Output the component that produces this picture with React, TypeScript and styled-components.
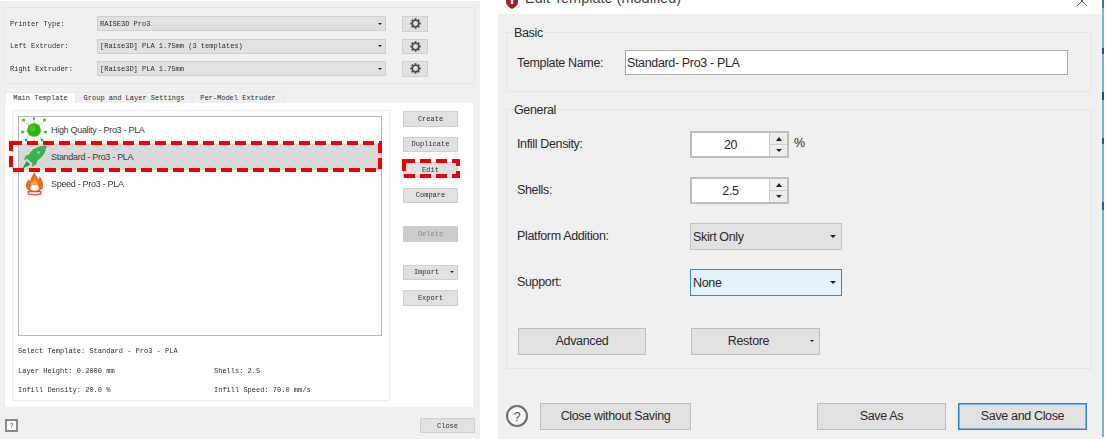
import React from "react";
import styled, { createGlobalStyle } from "styled-components";

const Global = createGlobalStyle`
  html, body { margin: 0; padding: 0; background: #fff; height: 439px; overflow: hidden; }
  #root { height: 439px; }
`;

const Page = styled.div`
  display: flex;
  width: 1105px;
  height: 439px;
  background: #fff;
  overflow: hidden;
`;

/* ---------- left window ---------- */
const LeftPane = styled.div`
  position: relative;
  width: 480px;
  height: 438px;
  margin-top: 1px;
  padding: 6px 5px 0 4px;
  box-sizing: border-box;
  background: #f0f0f0;
  font-family: "Liberation Mono", monospace;
  font-size: 7px;
  color: #2c2c2c;
  flex: none;
`;
const SoftText = styled.div`
  filter: blur(0.3px);
`;
const PrinterBox = styled.div`
  height: 77px;
  box-sizing: border-box;
  border: 1px solid #e6e6e6;
  padding: 8px 0 0 5px;
  display: flex;
  flex-direction: column;
  gap: 7px;
`;
const PrinterRow = styled.div`
  display: flex;
  align-items: center;
  height: 15.5px;
`;
const PrinterLabel = styled.span`
  width: 87px;
  flex: none;
`;
const PrinterSelect = styled.div`
  width: 289px;
  height: 15px;
  box-sizing: border-box;
  background: #e1e1e1;
  border: 1px solid #cfcfcf;
  display: flex;
  align-items: center;
  justify-content: space-between;
  padding: 0 3px 0 2px;
  flex: none;
`;
const Caret = styled.i<{ $size?: number }>`
  display: block;
  width: 0;
  height: 0;
  border-left: ${(p) => p.$size ?? 2}px solid transparent;
  border-right: ${(p) => p.$size ?? 2}px solid transparent;
  border-top: ${(p) => p.$size ?? 2}px solid #222;
  flex: none;
`;
const GearButton = styled.div`
  width: 26px;
  height: 15.5px;
  margin-left: 16px;
  box-sizing: border-box;
  background: #e1e1e1;
  border: 1px solid #cfcfcf;
  display: flex;
  align-items: center;
  justify-content: center;
  flex: none;
`;
const Tabs = styled.div`
  display: flex;
  margin: 8px 0 0 1px;
  height: 11px;
`;
const Tab = styled.div<{ $active?: boolean; $w: number }>`
  width: ${(p) => p.$w}px;
  box-sizing: border-box;
  background: ${(p) => (p.$active ? "#fff" : "#f0f0f0")};
  border: 1px solid #e8e8e8;
  border-bottom: none;
  display: flex;
  align-items: center;
  justify-content: center;
`;
const TabPanel = styled.div`
  margin-left: 1px;
  width: 468px;
  height: 304px;
  box-sizing: border-box;
  background: #fff;
  padding: 7px 0 0 7px;
  display: flex;
`;
const ListFrame = styled.div`
  width: 378px;
  height: 291px;
  box-sizing: border-box;
  border: 1px solid #ececec;
  padding: 5px 7px 0 5px;
  flex: none;
`;
const TemplateList = styled.div`
  width: 364px;
  height: 220px;
  box-sizing: border-box;
  border: 1px solid #b4b4b4;
  background: #fff;
`;
const TemplateRow = styled.div<{ $selected?: boolean }>`
  height: 26.7px;
  display: flex;
  align-items: center;
  background: ${(p) => (p.$selected ? "#d9d9d9" : "transparent")};
  font-family: "Liberation Sans", Arial, sans-serif;
  font-size: 9px;
  letter-spacing: -0.3px;
  color: #3a3a3a;
`;
const RowIcon = styled.span`
  width: 32px;
  height: 26px;
  box-sizing: border-box;
  padding-right: 2px;
  flex: none;
  display: flex;
  align-items: center;
  justify-content: center;
`;
const Summary = styled.div`
  display: grid;
  grid-template-columns: 196px 1fr;
  row-gap: 10.5px;
  padding-top: 11px;
  line-height: 9px;
`;
const SummaryWide = styled.div`
  grid-column: 1 / 3;
`;
const ActionColumn = styled.div`
  display: flex;
  flex-direction: column;
  margin-left: 13px;
  margin-top: 1px;
`;
const SmallButton = styled.div<{ $mt?: number; $disabled?: boolean; $pr?: number }>`
  width: 55px;
  height: 15.5px;
  margin-top: ${(p) => p.$mt ?? 0}px;
  padding-right: ${(p) => p.$pr ?? 0}px;
  box-sizing: border-box;
  background: ${(p) => (p.$disabled ? "#cccccc" : "#e1e1e1")};
  border: 1px solid ${(p) => (p.$disabled ? "#cccccc" : "#cfcfcf")};
  color: ${(p) => (p.$disabled ? "#8c8c8c" : "#2c2c2c")};
  display: flex;
  align-items: center;
  justify-content: center;
  position: relative;
`;
const ImportCaret = styled.span`
  position: absolute;
  right: 3px;
  top: 5px;
`;
const LeftFooter = styled.div`
  display: flex;
  align-items: center;
  justify-content: space-between;
  margin-top: 11px;
  padding-left: 1px;
`;
const HelpSquare = styled.div`
  width: 13px;
  height: 13px;
  box-sizing: border-box;
  border: 2px solid #8a8a8a;
  background: #fafafa;
  display: flex;
  align-items: center;
  justify-content: center;
  font-size: 7px;
  color: #555;
`;
const CloseSmall = styled(SmallButton)`
  height: 15px;
`;
const Highlight = styled.svg<{ $x: number; $y: number }>`
  position: absolute;
  left: ${(p) => p.$x}px;
  top: ${(p) => p.$y}px;
  pointer-events: none;
`;

/* ---------- right window ---------- */
const RightColumn = styled.div`
  width: 604px;
  margin-left: 18px;
  flex: none;
  font-family: "Liberation Sans", Arial, sans-serif;
  color: #2a2a2a;
  font-size: 12.5px;
  letter-spacing: -0.35px;
`;
const TitleBar = styled.div`
  height: 14px;
  display: flex;
  align-items: flex-end;
  justify-content: space-between;
  padding: 0 14px 7px 7px;
  box-sizing: border-box;
  font-size: 14.5px;
  letter-spacing: 0;
  color: #444;
`;
const TitleLeft = styled.div`
  display: flex;
  align-items: flex-end;
  gap: 6px;
  height: 18px;
  line-height: 18px;
  flex: none;
`;
const TitleIcon = styled.svg`
  margin-bottom: -2px;
  flex: none;
`;
const RightPane = styled.div`
  width: 604px;
  height: 425px;
  box-sizing: border-box;
  background: #f0f0f0;
  padding: 18px 10px 0 8px;
`;
const EdgeStrip = styled.div`
  width: 2px;
  height: 437px;
  flex: none;
  background: linear-gradient(
    to bottom,
    #4a6d80 0 8px,
    #7db2c8 8px 48px,
    #25506e 48px 54px,
    #7db2c8 54px 92px,
    #1f4f78 92px 100px,
    #7db2c8 100px 138px,
    #2f5670 138px 144px,
    #7db2c8 144px 202px,
    #1d5f96 202px 210px,
    #7db2c8 210px
  );
`;
const Group = styled.div<{ $h: number; $mt?: number }>`
  height: ${(p) => p.$h}px;
  margin-top: ${(p) => p.$mt ?? 0}px;
  box-sizing: border-box;
  border: 1px solid #e5e5e5;
`;
const Legend = styled.div`
  width: fit-content;
  margin: -7px 0 0 6px;
  padding: 0 1px;
  height: 15px;
  line-height: 15px;
  background: #f0f0f0;
`;
const NameRow = styled.div`
  display: flex;
  align-items: center;
  margin-top: 9px;
  padding-left: 10px;
`;
const NameLabel = styled.span`
  width: 108px;
  flex: none;
`;
const NameInput = styled.div`
  width: 443px;
  height: 25px;
  box-sizing: border-box;
  background: #fff;
  border: 1px solid #ababab;
  padding-left: 1px;
  display: flex;
  align-items: center;
`;
const FormRow = styled.div<{ $mt: number; $h?: number }>`
  display: flex;
  align-items: center;
  height: ${(p) => p.$h ?? 27}px;
  margin-top: ${(p) => p.$mt}px;
  padding-left: 10px;
`;
const FormLabel = styled.span`
  width: 173px;
  flex: none;
  margin-bottom: 2px;
`;
const Spin = styled.div`
  width: 99px;
  height: 27px;
  box-sizing: border-box;
  background: #fff;
  border: 2px solid #bdbdbd;
  display: flex;
  flex: none;
`;
const SpinValue = styled.div`
  flex: 1;
  display: flex;
  align-items: center;
  justify-content: center;
  padding-top: 1px;
`;
const SpinArrows = styled.div`
  width: 18px;
  display: flex;
  flex-direction: column;
  flex: none;
`;
const SpinArrow = styled.div`
  flex: 1;
  background: #ededed;
  border-left: 1px solid #c8c8c8;
  border-top: 1px solid #cfcfcf;
  display: flex;
  align-items: center;
  justify-content: center;
  &:first-child {
    border-top: none;
  }
`;
const CaretUp = styled.i`
  display: block;
  width: 0;
  height: 0;
  border-left: 3px solid transparent;
  border-right: 3px solid transparent;
  border-bottom: 4px solid #222;
`;
const Unit = styled.span`
  margin-left: 5px;
  margin-top: -4px;
`;
const ComboBox = styled.div<{ $focus?: boolean }>`
  width: 152px;
  height: 27px;
  box-sizing: border-box;
  background: ${(p) => (p.$focus ? "#e5f1fb" : "#e1e1e1")};
  border: 1px solid ${(p) => (p.$focus ? "#2f8ad6" : "#c4c4c4")};
  display: flex;
  align-items: center;
  justify-content: space-between;
  padding: 0 5px 0 2px;
  flex: none;
`;
const WideButton = styled.div<{ $w: number; $focus?: boolean; $pr?: number }>`
  width: ${(p) => p.$w}px;
  height: 26.5px;
  padding-right: ${(p) => p.$pr ?? 0}px;
  box-sizing: border-box;
  background: #e1e1e1;
  border: 1px solid ${(p) => (p.$focus ? "#1f86dc" : "#bcbcbc")};
  box-shadow: ${(p) => (p.$focus ? "inset 0 0 0 0.5px #1f86dc" : "none")};
  display: flex;
  align-items: center;
  justify-content: center;
  position: relative;
  flex: none;
`;
const RestoreCaret = styled.span`
  position: absolute;
  right: 5px;
  top: 11px;
`;
const ActionRow = styled.div`
  display: flex;
  margin-top: 32px;
  padding-left: 11px;
  gap: 45px;
`;
const Bottom = styled.div`
  display: flex;
  align-items: center;
  margin-top: 34px;
`;
const HelpCircle = styled.div`
  width: 22px;
  height: 22px;
  box-sizing: border-box;
  border: 2px solid #6e6e6e;
  border-radius: 50%;
  background: #fafafa;
  display: flex;
  align-items: center;
  justify-content: center;
  font-size: 13px;
  color: #555;
  margin-right: 12px;
  flex: none;
`;
const Spacer = styled.div<{ $w: number }>`
  width: ${(p) => p.$w}px;
  flex: none;
`;

const Gear = () => (
  <svg width="11" height="11" viewBox="0 0 24 24" aria-hidden="true">
    <g stroke="#505050" strokeWidth="4.4">
      <line x1="12" y1="0.5" x2="12" y2="23.5" />
      <line x1="0.5" y1="12" x2="23.5" y2="12" />
      <line x1="3.8" y1="3.8" x2="20.2" y2="20.2" />
      <line x1="20.2" y1="3.8" x2="3.8" y2="20.2" />
    </g>
    <circle cx="12" cy="12" r="7" fill="#e1e1e1" stroke="#505050" strokeWidth="3.6" />
  </svg>
);

const SunIcon = () => (
  <svg width="26" height="26" viewBox="0 0 26 26" aria-hidden="true">
    <g stroke="#6ccb5c" strokeWidth="1" strokeDasharray="2 1">
      <line x1="13" y1="13" x2="2" y2="3" />
      <line x1="13" y1="13" x2="24" y2="3" />
      <line x1="13" y1="13" x2="13" y2="1" />
      <line x1="13" y1="13" x2="1" y2="15" />
      <line x1="13" y1="13" x2="25" y2="15" />
      <line x1="13" y1="13" x2="4" y2="23" />
      <line x1="13" y1="13" x2="22" y2="23" />
    </g>
    <g fill="#3fb52e">
      <circle cx="2.5" cy="3" r="1.5" />
      <circle cx="23.5" cy="3" r="1.5" />
      <circle cx="13" cy="1.5" r="1.2" />
      <circle cx="1.5" cy="15" r="1.5" />
      <circle cx="24.5" cy="15" r="1.5" />
      <circle cx="5" cy="23" r="1.4" />
      <circle cx="21" cy="23" r="1.4" />
      <circle cx="13" cy="24.5" r="1.3" />
    </g>
    <circle cx="13" cy="13" r="6.8" fill="#2fb20f" />
    <circle cx="11.5" cy="11.5" r="3" fill="#55d033" opacity="0.7" />
  </svg>
);

const RocketIcon = () => (
  <svg width="25" height="24" viewBox="0 0 25 24" aria-hidden="true">
    <path d="M24.5 0.5 C16 1 10 4 7 9.5 L3.5 11 L2 15 L5.5 14 L10.5 18.5 L9.5 22 L14 19.5 L15.5 15.5 C21 12 24 7 24.5 0.5 Z" fill="#3cae58" />
    <path d="M4.5 16 L8.5 19.5 L0.5 23.5 Z" fill="#2c9348" />
    <circle cx="16.5" cy="7.5" r="1.4" fill="#8fd6a3" />
  </svg>
);

const FlameIcon = () => (
  <svg width="19" height="26" viewBox="0 0 20 26" aria-hidden="true">
    <path d="M10 0.5 C11 4 13 5 14 8 C15 7 15.5 6 15.5 5 C18 8 19.5 12 19 15.5 C18.6 19 15 21 10 21 C5 21 1.4 19 1 15.5 C0.6 12.5 2.5 10.5 3.5 8 C4.5 9 5 10 5.5 10 C5.5 6.5 8 4 10 0.5 Z" fill="#f0651a" />
    <path d="M10 6 C10.5 9 14 10 14 14 C14 15 13 15 12 14.5 C11 13 10 13 9 14 C8 15 6 15 6 13.5 C6 11 9 9.5 10 6 Z" fill="#f9a23a" />
    <ellipse cx="10" cy="17" rx="4.6" ry="3.2" fill="#fff" />
    <path d="M3.5 21 H16.5 V23.5 Q10 25.5 3.5 23.5 Z" fill="#fff" stroke="#e2483f" strokeWidth="1.4" />
  </svg>
);

const Dashes = ({ x, y, w, h }: { x: number; y: number; w: number; h: number }) => (
  <Highlight $x={x} $y={y} width={w} height={h} viewBox={`0 0 ${w} ${h}`} aria-hidden="true">
    <rect x="2" y="2" width={w - 4} height={h - 4} fill="none" stroke="#f00000" strokeWidth="4" strokeDasharray="11 5" />
  </Highlight>
);

export default function App() {
  return (
    <Page>
      <Global />
      <LeftPane>
        <SoftText>
          <PrinterBox>
            <PrinterRow>
              <PrinterLabel>Printer Type:</PrinterLabel>
              <PrinterSelect>RAISE3D Pro3<Caret /></PrinterSelect>
              <GearButton><Gear /></GearButton>
            </PrinterRow>
            <PrinterRow>
              <PrinterLabel>Left Extruder:</PrinterLabel>
              <PrinterSelect>[Raise3D] PLA 1.75mm (3 templates)<Caret /></PrinterSelect>
              <GearButton><Gear /></GearButton>
            </PrinterRow>
            <PrinterRow>
              <PrinterLabel>Right Extruder:</PrinterLabel>
              <PrinterSelect>[Raise3D] PLA 1.75mm<Caret /></PrinterSelect>
              <GearButton><Gear /></GearButton>
            </PrinterRow>
          </PrinterBox>
          <Tabs>
            <Tab $active $w={71}>Main Template</Tab>
            <Tab $w={116}>Group and Layer Settings</Tab>
            <Tab $w={92}>Per-Model Extruder</Tab>
          </Tabs>
          <TabPanel>
            <ListFrame>
              <TemplateList>
                <TemplateRow><RowIcon><SunIcon /></RowIcon>High Quality - Pro3 - PLA</TemplateRow>
                <TemplateRow $selected><RowIcon><RocketIcon /></RowIcon>Standard - Pro3 - PLA</TemplateRow>
                <TemplateRow><RowIcon><FlameIcon /></RowIcon>Speed - Pro3 - PLA</TemplateRow>
              </TemplateList>
              <Summary>
                <SummaryWide>Select Template: Standard - Pro3 - PLA</SummaryWide>
                <span>Layer Height: 0.2000 mm</span>
                <span>Shells: 2.5</span>
                <span>Infill Density: 20.0 %</span>
                <span>Infill Speed: 70.0 mm/s</span>
              </Summary>
            </ListFrame>
            <ActionColumn>
              <SmallButton>Create</SmallButton>
              <SmallButton $mt={10}>Duplicate</SmallButton>
              <SmallButton $mt={10}>Edit</SmallButton>
              <SmallButton $mt={10}>Compare</SmallButton>
              <SmallButton $mt={23} $disabled>Delete</SmallButton>
              <SmallButton $mt={23} $pr={8}>
                Import
                <ImportCaret><Caret /></ImportCaret>
              </SmallButton>
              <SmallButton $mt={10}>Export</SmallButton>
            </ActionColumn>
          </TabPanel>
          <LeftFooter>
            <HelpSquare>?</HelpSquare>
            <CloseSmall>Close</CloseSmall>
          </LeftFooter>
        </SoftText>
        <Dashes x={9} y={140} w={373} h={31} />
        <Dashes x={402} y={158} w={58} h={19} />
      </LeftPane>

      <RightColumn>
        <TitleBar>
          <TitleLeft>
            <TitleIcon width="14" height="14" viewBox="0 0 14 14" aria-hidden="true">
              <path d="M1 1 H13 V7 Q13 11 7 14 Q1 11 1 7 Z" fill="#a81e24" />
              <rect x="5.8" y="4" width="2.4" height="5" fill="#fff" />
            </TitleIcon>
            Edit Template (modified)
          </TitleLeft>
          <svg width="12" height="12" viewBox="0 0 12 12" aria-hidden="true">
            <path d="M1 1 L11 11 M11 1 L1 11" stroke="#555" strokeWidth="1" />
          </svg>
        </TitleBar>
        <RightPane>
          <Group $h={60}>
            <Legend>Basic</Legend>
            <NameRow>
              <NameLabel>Template Name:</NameLabel>
              <NameInput>Standard- Pro3 - PLA</NameInput>
            </NameRow>
          </Group>
          <Group $h={260} $mt={17}>
            <Legend>General</Legend>
            <FormRow $mt={13}>
              <FormLabel>Infill Density:</FormLabel>
              <Spin>
                <SpinValue>20</SpinValue>
                <SpinArrows>
                  <SpinArrow><CaretUp /></SpinArrow>
                  <SpinArrow><Caret $size={3} /></SpinArrow>
                </SpinArrows>
              </Spin>
              <Unit>%</Unit>
            </FormRow>
            <FormRow $mt={19}>
              <FormLabel>Shells:</FormLabel>
              <Spin>
                <SpinValue>2.5</SpinValue>
                <SpinArrows>
                  <SpinArrow><CaretUp /></SpinArrow>
                  <SpinArrow><Caret $size={3} /></SpinArrow>
                </SpinArrows>
              </Spin>
            </FormRow>
            <FormRow $mt={19}>
              <FormLabel>Platform Addition:</FormLabel>
              <ComboBox>Skirt Only<Caret $size={3} /></ComboBox>
            </FormRow>
            <FormRow $mt={19}>
              <FormLabel>Support:</FormLabel>
              <ComboBox $focus>None<Caret $size={3} /></ComboBox>
            </FormRow>
            <ActionRow>
              <WideButton $w={128}>Advanced</WideButton>
              <WideButton $w={129} $pr={14}>
                Restore
                <RestoreCaret><Caret $size={2.5} /></RestoreCaret>
              </WideButton>
            </ActionRow>
          </Group>
          <Bottom>
            <HelpCircle>?</HelpCircle>
            <WideButton $w={151}>Close without Saving</WideButton>
            <Spacer $w={126} />
            <WideButton $w={129}>Save As</WideButton>
            <Spacer $w={12} />
            <WideButton $w={129} $focus>Save and Close</WideButton>
          </Bottom>
        </RightPane>
      </RightColumn>
      <EdgeStrip />
    </Page>
  );
}
